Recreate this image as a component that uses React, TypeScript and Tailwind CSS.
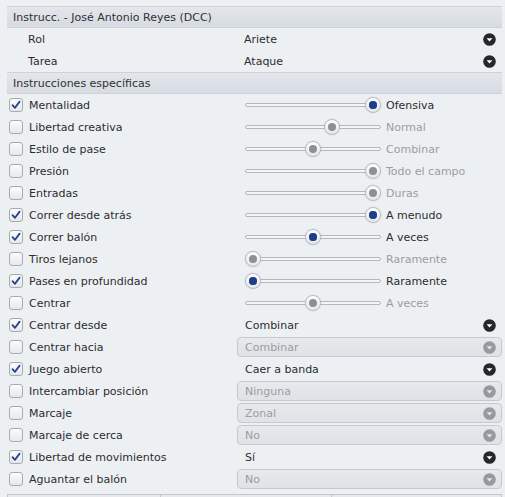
import React from "react";

type Row =
  | { kind: "slider"; label: string; checked: boolean; pos: number; value: string }
  | { kind: "select"; label: string; checked: boolean; value: string };

const rows: Row[] = [
  { kind: "slider", label: "Mentalidad", checked: true, pos: 1, value: "Ofensiva" },
  { kind: "slider", label: "Libertad creativa", checked: false, pos: 0.66, value: "Normal" },
  { kind: "slider", label: "Estilo de pase", checked: false, pos: 0.5, value: "Combinar" },
  { kind: "slider", label: "Presión", checked: false, pos: 1, value: "Todo el campo" },
  { kind: "slider", label: "Entradas", checked: false, pos: 1, value: "Duras" },
  { kind: "slider", label: "Correr desde atrás", checked: true, pos: 1, value: "A menudo" },
  { kind: "slider", label: "Correr balón", checked: true, pos: 0.5, value: "A veces" },
  { kind: "slider", label: "Tiros lejanos", checked: false, pos: 0, value: "Raramente" },
  { kind: "slider", label: "Pases en profundidad", checked: true, pos: 0, value: "Raramente" },
  { kind: "slider", label: "Centrar", checked: false, pos: 0.5, value: "A veces" },
  { kind: "select", label: "Centrar desde", checked: true, value: "Combinar" },
  { kind: "select", label: "Centrar hacia", checked: false, value: "Combinar" },
  { kind: "select", label: "Juego abierto", checked: true, value: "Caer a banda" },
  { kind: "select", label: "Intercambiar posición", checked: false, value: "Ninguna" },
  { kind: "select", label: "Marcaje", checked: false, value: "Zonal" },
  { kind: "select", label: "Marcaje de cerca", checked: false, value: "No" },
  { kind: "select", label: "Libertad de movimientos", checked: true, value: "Sí" },
  { kind: "select", label: "Aguantar el balón", checked: false, value: "No" },
];

function Arrow({ disabled }: { disabled?: boolean }) {
  return (
    <svg width="13" height="13" viewBox="0 0 13 13" className="shrink-0">
      <circle cx="6.5" cy="6.5" r="6.3" fill={disabled ? "#96999d" : "#262728"} />
      <path d="M3.6 5.2 L9.4 5.2 L6.5 8.6 Z" fill={disabled ? "#e4e6e9" : "#ffffff"} />
    </svg>
  );
}

function Checkbox({ checked }: { checked: boolean }) {
  return (
    <div className="w-[14px] h-[14px] rounded-[3px] border border-[#a7abb1] bg-gradient-to-b from-[#fbfbfc] to-[#e6e8eb] flex items-center justify-center shrink-0">
      {checked && (
        <svg width="10" height="10" viewBox="0 0 10 10">
          <path d="M1.5 5.2 L4 7.8 L8.6 1.6" fill="none" stroke="#23438f" strokeWidth="1.8" strokeLinecap="round" strokeLinejoin="round" />
        </svg>
      )}
    </div>
  );
}

function Slider({ pos, active }: { pos: number; active: boolean }) {
  return (
    <div className="relative w-[136px] h-[16px] shrink-0">
      <div className="absolute left-0 right-0 top-[6px] h-[4px] rounded-full border border-[#b4b8be] bg-[#f4f5f7]" />
      <div
        className="absolute top-0 w-[16px] h-[16px] rounded-full border border-[#b9bdc3] bg-gradient-to-b from-[#ffffff] to-[#e3e6ea] shadow-[0_0_1px_rgba(0,0,0,0.25)] flex items-center justify-center"
        style={{ left: `${pos * 120}px` }}
      >
        <div className={active ? "w-[8px] h-[8px] rounded-full bg-[#1e3d8d] shadow-[inset_0_0_1px_#0c2361]" : "w-[8px] h-[8px] rounded-full bg-[#8d8f92]"} />
      </div>
    </div>
  );
}

function Header({ text }: { text: string }) {
  return (
    <div className="h-[22px] flex items-center pl-[6px] bg-gradient-to-b from-[#e3e6eb] to-[#d7dbe2] border-y border-[#cdd2d9] text-[#2e3133]">
      <span className="pt-[2px]">{text}</span>
    </div>
  );
}

export default function App() {
  return (
    <div
      className="w-[505px] h-[497px] overflow-hidden bg-[#edf0f3] text-[11px] text-[#2b2d2f]"
      style={{ fontFamily: '"DejaVu Sans", sans-serif' }}
    >
      <div className="pl-[7px] pr-[3px] pt-[6px]">
        <Header text="Instrucc. - José Antonio Reyes (DCC)" />
        <div className="h-[22px] grid grid-cols-[230px_1fr] items-center">
          <div className="pl-[21px] pt-[2px]">Rol</div>
          <div className="flex items-center justify-between pl-[7px] pr-[6px]">
            <span className="pt-[2px]">Ariete</span>
            <Arrow />
          </div>
        </div>
        <div className="h-[22px] grid grid-cols-[230px_1fr] items-center">
          <div className="pl-[21px] pt-[2px]">Tarea</div>
          <div className="flex items-center justify-between pl-[7px] pr-[6px]">
            <span className="pt-[2px]">Ataque</span>
            <Arrow />
          </div>
        </div>
        <Header text="Instrucciones específicas" />
        {rows.map((r) => (
          <div key={r.label} className="h-[22px] grid grid-cols-[230px_1fr] items-center">
            <div className="flex items-center gap-[6px] pl-[2px]">
              <Checkbox checked={r.checked} />
              <span className="pt-[2px]">{r.label}</span>
            </div>
            {r.kind === "slider" ? (
              <div className="flex items-center pl-[8px]">
                <Slider pos={r.pos} active={r.checked} />
                <span className={r.checked ? "ml-[5px] pt-[2px] text-[#2b2d2f]" : "ml-[5px] pt-[2px] text-[#9b9da0]"}>{r.value}</span>
              </div>
            ) : r.checked ? (
              <div className="flex items-center justify-between pl-[8px] pr-[6px]">
                <span className="pt-[2px]">{r.value}</span>
                <Arrow />
              </div>
            ) : (
              <div className="h-[20px] flex items-center justify-between pl-[7px] pr-[5px] rounded-[4px] border border-[#c6cace] bg-gradient-to-b from-[#e7e9ec] to-[#dfe2e6] text-[#9b9da0]">
                <span className="pt-[2px]">{r.value}</span>
                <Arrow disabled />
              </div>
            )}
          </div>
        ))}
        <div className="mt-[4px] flex h-[8px] border-t border-[#c3c7cd]">
          <div className="w-[153px] border-l border-[#c3c7cd] bg-[#e6e9ed]" />
          <div className="w-[171px] border-l border-[#c3c7cd] bg-[#e6e9ed]" />
          <div className="flex-1 border-l border-r border-[#c3c7cd] bg-[#e6e9ed]" />
        </div>
      </div>
    </div>
  );
}
